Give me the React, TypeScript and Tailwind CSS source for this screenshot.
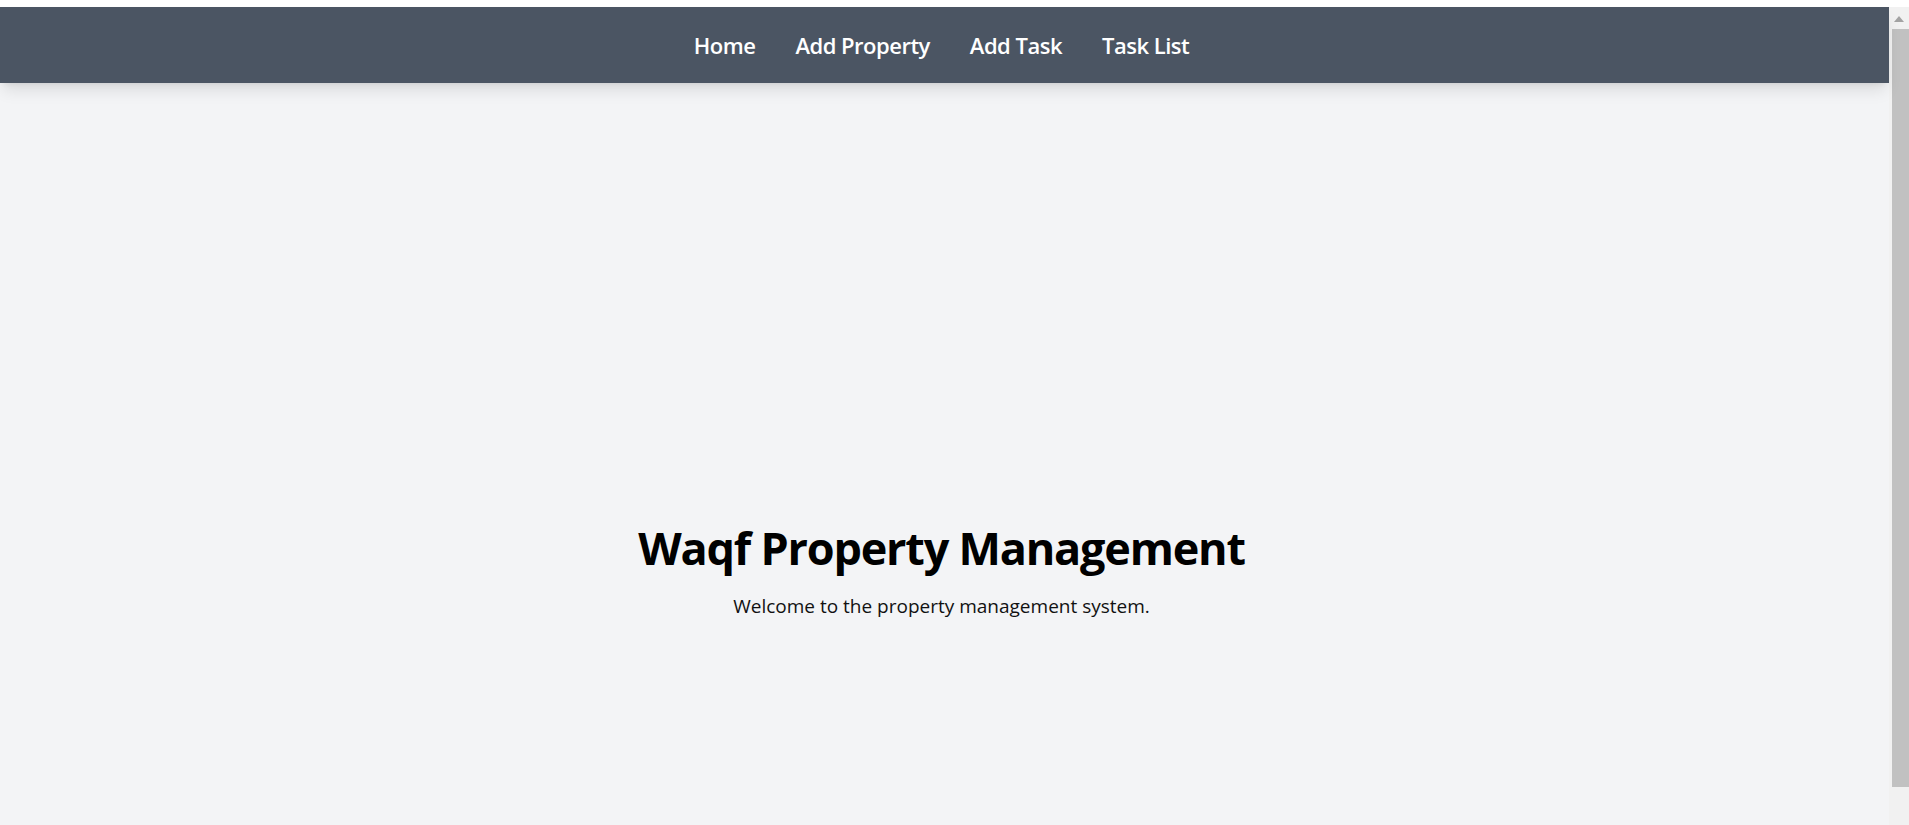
const links = ["Home", "Add Property", "Add Task", "Task List"];

function Scrollbar() {
  return (
    <div className="w-[20px] bg-[#f1f1f1] flex flex-col items-center shrink-0">
      <div className="h-[22px] flex items-center justify-center pt-[2px]">
        <svg width="10" height="6" viewBox="0 0 10 6">
          <path d="M5 0 L10 6 L0 6 Z" fill="#a3a3a3" />
        </svg>
      </div>
      <div className="h-[758px] w-[17px] ml-[2px] bg-[#c1c1c1]" />
    </div>
  );
}

export default function App() {
  return (
    <div
      className="h-screen flex flex-col bg-white overflow-hidden"
      style={{ fontFamily: '"Open Sans", "Noto Sans", sans-serif' }}
    >
      <div className="h-[7px] bg-white shrink-0" />
      <div className="flex-1 flex min-h-0">
        <div className="flex-1 bg-gray-100 flex flex-col">
          <nav className="bg-[#4b5563] shadow-lg h-[76px] flex items-center justify-center shrink-0 relative z-10">
            <ul className="flex gap-[40px] pr-[6px]">
              {links.map((l) => (
                <li key={l}>
                  <a
                    href="#"
                    className="text-white font-semibold text-[22px] leading-[28px] tracking-[-0.5px]"
                  >
                    {l}
                  </a>
                </li>
              ))}
            </ul>
          </nav>
          <main className="flex-1 flex flex-col items-center pt-[440px] pr-[6px] text-center">
            <h1 className="text-[45px] leading-[50px] font-bold text-black mb-[18px] tracking-[-1.2px]">
              Waqf Property Management
            </h1>
            <p className="text-[19px] leading-[30px] text-[#111]">
              Welcome to the property management system.
            </p>
          </main>
        </div>
        <Scrollbar />
      </div>
    </div>
  );
}
